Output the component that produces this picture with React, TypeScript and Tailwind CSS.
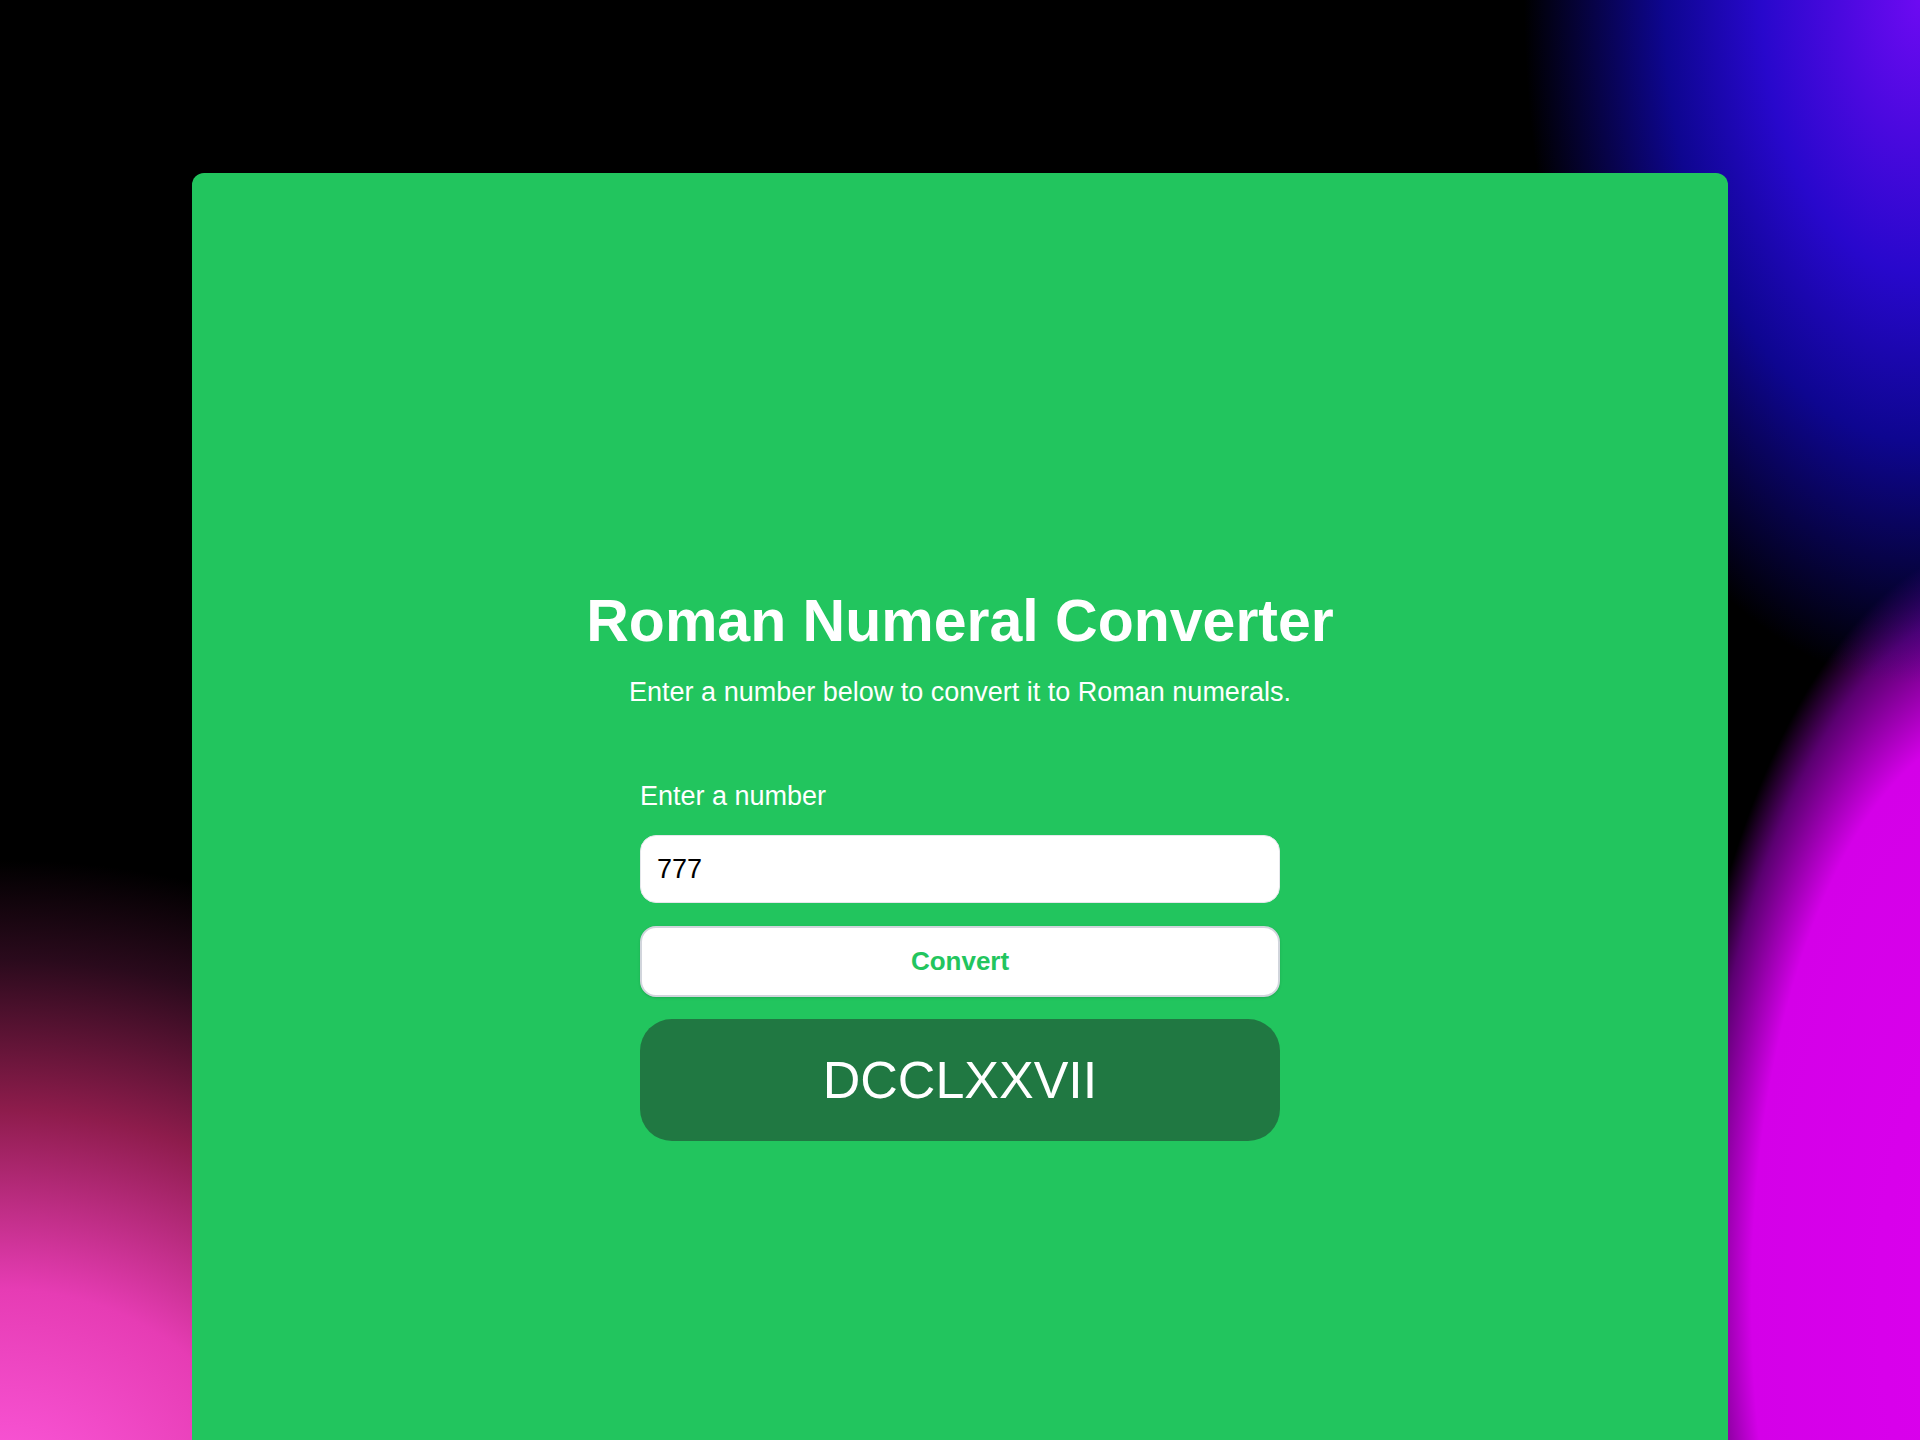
import { useState } from 'react'

const numerals: [number, string][] = [
  [1000, 'M'],
  [900, 'CM'],
  [500, 'D'],
  [400, 'CD'],
  [100, 'C'],
  [90, 'XC'],
  [50, 'L'],
  [40, 'XL'],
  [10, 'X'],
  [9, 'IX'],
  [5, 'V'],
  [4, 'IV'],
  [1, 'I'],
]

function toRoman(n: number) {
  let out = ''
  let rest = n
  for (const [value, sym] of numerals) {
    while (rest >= value) {
      out += sym
      rest -= value
    }
  }
  return out
}

export default function App() {
  const [value, setValue] = useState('777')
  const [result, setResult] = useState(toRoman(777))

  const convert = () => {
    const n = parseInt(value, 10)
    if (!n || n < 1 || n > 3999) {
      setResult('Enter 1 - 3999')
      return
    }
    setResult(toRoman(n))
  }

  return (
    <div className="h-[1440px] w-full overflow-hidden bg-black bg-[image:radial-gradient(ellipse_440px_760px_at_1920px_0px,#6d0af2_0%,#2808cc_36%,#0e0690_58%,transparent_90%),radial-gradient(ellipse_340px_760px_at_2010px_1300px,#dc00ee_0%,#d400e8_76%,#5a0070_92%,transparent_100%),radial-gradient(ellipse_760px_660px_at_0px_1520px,#ff5ce0_0%,#e63cb4_35%,#8e1c4c_62%,#2a0a1c_85%,transparent_100%)] px-[192px] pt-[173px] font-['Liberation_Sans',Arial,sans-serif]">
      <div className="flex h-[1387px] flex-col items-center justify-center rounded-xl bg-[#22c55e]">
        <h1 className="text-[59px] leading-[58px] font-bold text-white">Roman Numeral Converter</h1>
        <p className="mt-6 text-[27px] leading-9 text-white">Enter a number below to convert it to Roman numerals.</p>

        <div className="mt-[68px] flex w-[640px] flex-col">
          <label htmlFor="num" className="text-[27px] leading-9 text-white">Enter a number</label>
          <input
            id="num"
            type="text"
            value={value}
            onChange={(e) => setValue(e.target.value)}
            className="mt-[21px] h-[68px] rounded-2xl border border-gray-200 bg-white px-4 text-[27px] text-black outline-none"
          />
          <button
            onClick={convert}
            className="mt-[23px] h-[71px] rounded-2xl border-2 border-gray-300 bg-white text-[26px] font-bold text-[#22c55e] shadow-sm"
          >
            Convert
          </button>
          <div className="mt-[22px] flex h-[122px] items-center justify-center rounded-[32px] bg-[#207842] text-[52px] text-white">
            {result}
          </div>
        </div>
      </div>
    </div>
  )
}
